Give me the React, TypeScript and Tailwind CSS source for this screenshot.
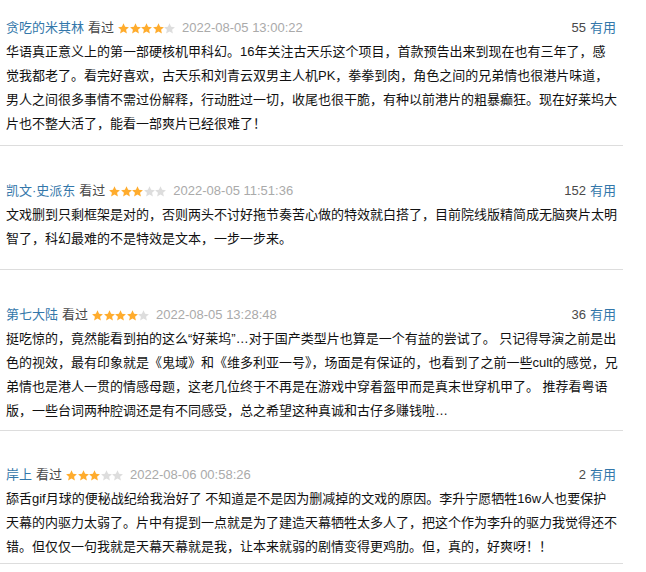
const comments = [
  {
    user: '贪吃的米其林',
    stars: 4,
    time: '2022-08-05 13:00:22',
    votes: 55,
    pad: 'pt-[18px] pb-[9px]',
    text: '华语真正意义上的第一部硬核机甲科幻。16年关注古天乐这个项目，首款预告出来到现在也有三年了，感觉我都老了。看完好喜欢，古天乐和刘青云双男主人机PK，拳拳到肉，角色之间的兄弟情也很港片味道，男人之间很多事情不需过份解释，行动胜过一切，收尾也很干脆，有种以前港片的粗暴癫狂。现在好莱坞大片也不整大活了，能看一部爽片已经很难了！',
  },
  {
    user: '凯文·史派东',
    stars: 3,
    time: '2022-08-05 11:51:36',
    votes: 152,
    pad: 'pt-[35px] pb-[18px]',
    text: '文戏删到只剩框架是对的，否则两头不讨好拖节奏苦心做的特效就白搭了，目前院线版精简成无脑爽片太明智了，科幻最难的不是特效是文本，一步一步来。',
  },
  {
    user: '第七大陆',
    stars: 4,
    time: '2022-08-05 13:28:48',
    votes: 36,
    pad: 'pt-[35px] pb-[7px]',
    text: '挺吃惊的，竟然能看到拍的这么“好莱坞”…对于国产类型片也算是一个有益的尝试了。 只记得导演之前是出色的视效，最有印象就是《鬼域》和《维多利亚一号》，场面是有保证的，也看到了之前一些cult的感觉，兄弟情也是港人一贯的情感母题，这老几位终于不再是在游戏中穿着盔甲而是真末世穿机甲了。 推荐看粤语版，一些台词两种腔调还是有不同感受，总之希望这种真诚和古仔多赚钱啦…',
  },
  {
    user: '岸上',
    stars: 3,
    time: '2022-08-06 00:58:26',
    votes: 2,
    pad: 'pt-[34px] pb-[4px]',
    text: '舔舌gif月球的便秘战纪给我治好了 不知道是不是因为删减掉的文戏的原因。李升宁愿牺牲16w人也要保护天幕的内驱力太弱了。片中有提到一点就是为了建造天幕牺牲太多人了，把这个作为李升的驱力我觉得还不错。但仅仅一句我就是天幕天幕就是我，让本来就弱的剧情变得更鸡肋。但，真的，好爽呀！！',
  },
];

function Star({ on }: { on: boolean }) {
  return (
    <svg width="11" height="11" viewBox="0 0 24 24" className="shrink-0">
      <path
        d="M12 0.5l3.5 7.6 8.3.9-6.2 5.6 1.8 8.2L12 18.6l-7.4 4.2 1.8-8.2L.2 9l8.3-.9z"
        fill={on ? '#ffac2d' : '#dddddd'}
      />
    </svg>
  );
}

export default function App() {
  return (
    <div
      className="w-[623px] bg-white text-[13px] text-[#111]"
      style={{ fontFamily: '"Liberation Sans", Helvetica, Arial, "Noto Sans CJK SC", sans-serif' }}
    >
      {comments.map((c) => (
        <div key={c.user} className={`border-b border-[#dddddd] pl-[6px] ${c.pad}`}>
          <div className="flex h-[20px] items-center justify-between pr-[7px] leading-[20px]">
            <div className="flex items-center">
              <span className="text-[#3377aa]">{c.user}</span>
              <span className="ml-[4px] text-[#494949]">看过</span>
              <span className="ml-[4px] flex gap-[0.5px]">
                {[0, 1, 2, 3, 4].map((i) => (
                  <Star key={i} on={i < c.stars} />
                ))}
              </span>
              <span className="ml-[7px] text-[#aaaaaa]">{c.time}</span>
            </div>
            <div>
              <span className="text-[#494949]">{c.votes}</span>
              <span className="ml-[4px] text-[#3377aa]">有用</span>
            </div>
          </div>
          <p className="mt-[2px] pr-[5px] leading-[24px] text-[#111]">{c.text}</p>
        </div>
      ))}
    </div>
  );
}
